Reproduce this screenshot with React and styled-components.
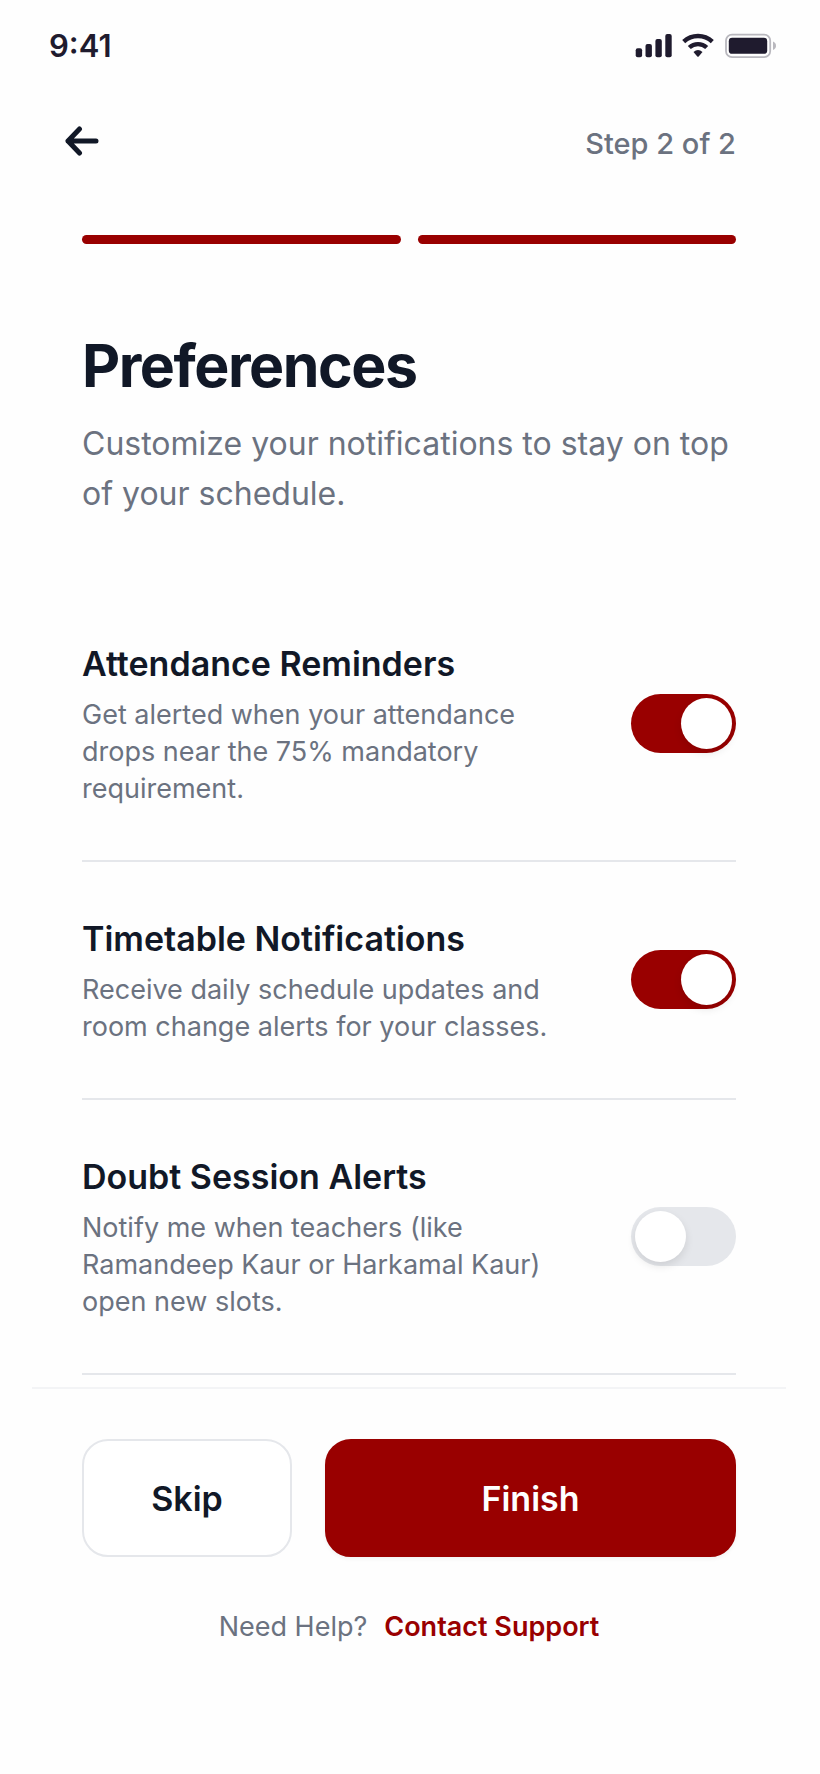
import { useState } from "react";
import styled, { createGlobalStyle } from "styled-components";

const options = [
  {
    id: "attendance",
    title: "Attendance Reminders",
    text: "Get alerted when your attendance drops near the 75% mandatory requirement.",
  },
  {
    id: "timetable",
    title: "Timetable Notifications",
    text: "Receive daily schedule updates and room change alerts for your classes.",
  },
  {
    id: "doubts",
    title: "Doubt Session Alerts",
    text: "Notify me when teachers (like Ramandeep Kaur or Harkamal Kaur) open new slots.",
  },
];

export default function App() {
  const [enabled, setEnabled] = useState({ attendance: true, timetable: true, doubts: false });
  const toggle = (id) => {
    setEnabled({ ...enabled, [id]: !enabled[id] });
  };
  return (
    <>
      <GlobalStyle />
      <Screen>
        <StatusBar>
          <Clock>9:41</Clock>
          <StatusIcons />
        </StatusBar>
        <Header>
          <BackButton type="button" aria-label="Back">
            <svg width="34" height="30" viewBox="0 0 34 30" fill="none" stroke="currentColor" strokeWidth="5" strokeLinecap="round" strokeLinejoin="round">
              <path d="M14.5 3 L3 15 L14.5 27 M3 15 H31" />
            </svg>
          </BackButton>
          <Step>Step 2 of 2</Step>
        </Header>
        <Content>
          <Progress>
            <Segment $done />
            <Segment $done />
          </Progress>
          <Title>Preferences</Title>
          <Subtitle>Customize your notifications to stay on top of your schedule.</Subtitle>
          <List>
            {options.map(({ id, title, text }) => (
              <Row key={id}>
                <RowText>
                  <RowTitle htmlFor={id}>{title}</RowTitle>
                  <RowInfo id={`${id}-info`}>{text}</RowInfo>
                </RowText>
                <Switch
                  id={id}
                  type="checkbox"
                  role="switch"
                  aria-describedby={`${id}-info`}
                  checked={enabled[id]}
                  onChange={() => toggle(id)}
                />
              </Row>
            ))}
          </List>
        </Content>
        <Footer>
          <Actions>
            <Button type="button">Skip</Button>
            <Button type="button" $primary>Finish</Button>
          </Actions>
          <Help>
            <span>Need Help?</span>
            <HelpLink href="#support">Contact Support</HelpLink>
          </Help>
        </Footer>
      </Screen>
    </>
  );
}

function StatusIcons() {
  return (
    <svg width="142" height="26" viewBox="0 0 142 26" fill="#1f1b2e" aria-hidden="true">
      <rect x="0.7" y="15.2" width="6.4" height="9" rx="2" />
      <rect x="10.5" y="11" width="6.4" height="13.2" rx="2" />
      <rect x="20.4" y="6" width="6.4" height="18.2" rx="2" />
      <rect x="30.3" y="1" width="6.4" height="23.2" rx="2" />
      <g fill="none" stroke="#1f1b2e" strokeWidth="4.4">
        <path d="M48.7 8.6 A21.2 21.2 0 0 1 77.3 8.6" />
        <path d="M54.3 14.5 A12.8 12.8 0 0 1 71.7 14.5" />
      </g>
      <path d="M58.5 19 Q63 15.2 67.5 19 L63.7 23.4 Q63 24.2 62.3 23.4 Z" />
      <rect x="91" y="1.6" width="44.2" height="22.6" rx="6" fill="none" stroke="#b9b8be" strokeWidth="1.8" />
      <rect x="93.8" y="4.8" width="38.4" height="16" rx="3.4" />
      <path d="M138 8.4 Q141 9.6 141 12.7 Q141 15.8 138 17 Z" fill="#b9b8be" />
    </svg>
  );
}

const GlobalStyle = createGlobalStyle`
  * {
    box-sizing: border-box;
  }
  body {
    margin: 0;
    background: #fefefe;
    color: #111827;
    font-family: Inter, "Liberation Sans", sans-serif;
  }
`;

const Screen = styled.main`
  display: flex;
  flex-direction: column;
  padding: 0 34px 127px 32px;
`;

const StatusBar = styled.div`
  display: flex;
  align-items: center;
  justify-content: space-between;
  height: 92px;
  padding: 0 9px 0 17px;
`;

const Clock = styled.span`
  color: #1f1b2e;
  font-size: 31px;
  font-weight: 600;
  line-height: 38px;
`;

const Header = styled.header`
  display: flex;
  align-items: center;
  justify-content: space-between;
  height: 104px;
  padding: 0 50px 0 33px;
`;

const BackButton = styled.button`
  display: flex;
  padding: 0 0 6px;
  border: 0;
  background: none;
  color: #111827;
  cursor: pointer;
`;

const Step = styled.span`
  color: #6b7280;
  font-size: 29px;
  font-weight: 500;
  line-height: 42px;
`;

const Content = styled.section`
  display: flex;
  flex-direction: column;
  padding: 39px 50px 12px;
`;

const Progress = styled.div`
  display: flex;
  gap: 17px;
`;

const Segment = styled.span`
  flex: 1;
  height: 9px;
  border-radius: 5px;
  background: ${(props) => (props.$done ? "#990000" : "#e5e7eb")};
`;

const Title = styled.h1`
  margin: 85px 0 16px;
  font-size: 59px;
  font-weight: 700;
  line-height: 74px;
  letter-spacing: -0.025em;
`;

const Subtitle = styled.p`
  margin: 0;
  color: #6b7280;
  font-size: 32px;
  font-weight: 400;
  line-height: 50px;
`;

const List = styled.div`
  margin-top: 68px;
`;

const Row = styled.div`
  display: flex;
  align-items: center;
  justify-content: space-between;
  gap: 34px;
  padding: 52px 0 53px;
  border-bottom: 2px solid #e5e7eb;
`;

const RowText = styled.div`
  display: flex;
  flex-direction: column;
  gap: 7px;
  max-width: 480px;
`;

const RowTitle = styled.label`
  font-size: 34px;
  font-weight: 600;
  line-height: 50px;
  cursor: pointer;
`;

const RowInfo = styled.p`
  margin: 0;
  color: #6b7280;
  font-size: 27px;
  line-height: 37px;
`;

const Switch = styled.input`
  appearance: none;
  display: flex;
  flex-shrink: 0;
  justify-content: flex-start;
  width: 105px;
  height: 59px;
  margin: 0;
  padding: 4px;
  border-radius: 30px;
  background: #e5e7eb;
  cursor: pointer;

  &::before {
    content: "";
    width: 51px;
    height: 51px;
    border-radius: 50%;
    background: #ffffff;
    box-shadow: 0 4px 8px rgba(0, 0, 0, 0.1);
  }
  &:checked {
    justify-content: flex-end;
    background: #990000;
  }
`;

const Footer = styled.footer`
  padding: 50px 50px 0;
  border-top: 2px solid #f3f4f6;
`;

const Actions = styled.div`
  display: grid;
  grid-template-columns: 210px 1fr;
  gap: 33px;
`;

const Button = styled.button`
  height: 118px;
  border: 2px solid ${(props) => (props.$primary ? "#990000" : "#e5e7eb")};
  border-radius: 26px;
  background: ${(props) => (props.$primary ? "#990000" : "#ffffff")};
  box-shadow: ${(props) => (props.$primary ? "0 2px 4px rgba(0, 0, 0, 0.05)" : "none")};
  color: ${(props) => (props.$primary ? "#ffffff" : "#111827")};
  font-family: inherit;
  font-size: 34px;
  font-weight: 600;
  cursor: pointer;
`;

const Help = styled.p`
  display: flex;
  justify-content: center;
  gap: 17px;
  margin: 51px 0 0;
  color: #6b7280;
  font-size: 27px;
  line-height: 38px;
`;

const HelpLink = styled.a`
  color: #990000;
  font-weight: 600;
  text-decoration: none;
`;
